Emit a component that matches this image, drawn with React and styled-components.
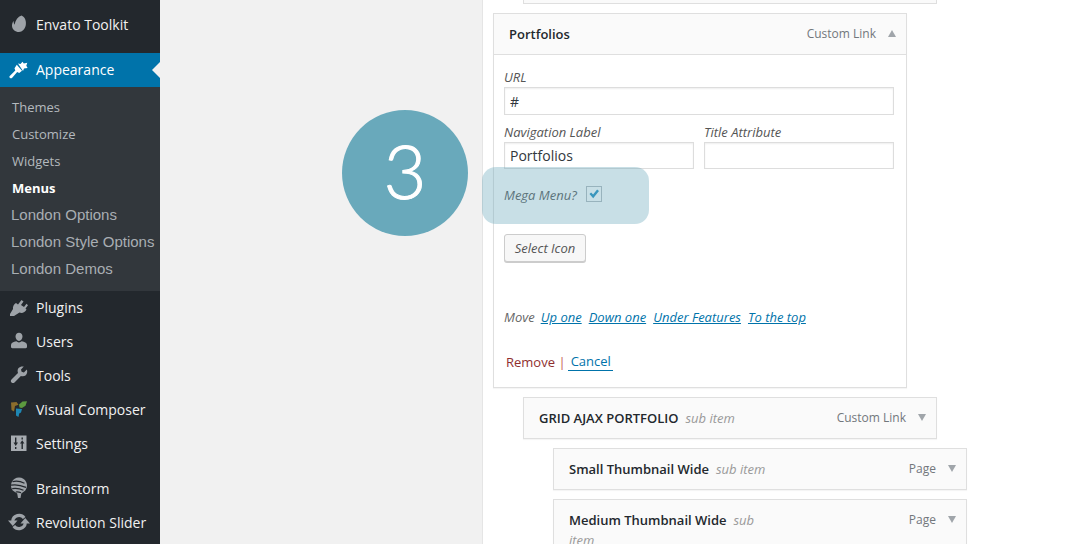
import React from "react";
import styled, { createGlobalStyle } from "styled-components";

const GlobalStyle = createGlobalStyle`
	html, body {
		margin: 0;
		height: 100%;
		overflow: hidden;
		background: #fff;
		font-family: "Open Sans", sans-serif;
	}
`;

//icons
const EnvatoIcon = () => (
	<svg width="20" height="20" viewBox="0 0 20 20">
		<path d="M12.500 1.500c3.500 1.500 5 5.500 4.300 9.500-.7 4-3.500 7-6.800 7-3.800 0-7-2.600-7-6.300 0-1.800.6-3.400 1.500-4.700.1 1.500.4 2.800 1 3.700C6.500 6 8.800 2.800 12.500 1.500z" fill="#9ea3a8" />
	</svg>
);
const BrushIcon = () => (
	<svg width="20" height="20" viewBox="0 0 20 20">
		<path d="M9 4.500l2.500.5L13.500 2.800 14.800 4.400 18.300 3.800 17.300 6.800 18.600 9 15 9.500 14 12z" fill="#fff" />
		<path d="M7.800 5.800l5.200 6-2.800 2.200-2-1-5 5.800c-.7.700-1.800.7-2.400 0-.6-.7-.5-1.500.2-2.100L6.300 11.400 5.500 9.200z" fill="#fff" />
	</svg>
);
const PluginIcon = () => (
	<svg width="20" height="20" viewBox="0 0 20 20">
		<path d="M12.500 3l2 1.500L12 8l3 2 2.500-3.200 1.500 1.500-2.500 3.200 1 1c-1.500 3-4.500 4-7 3L5 19H1v-2l3-5c-.5-2.500 1-5 3-6l2 1.500z" fill="#9ea3a8" />
	</svg>
);
const UserIcon = () => (
	<svg width="20" height="20" viewBox="0 0 20 20">
		<path d="M10 1.800c2 0 3.500 1.600 3.500 3.800S12 10 10 10 6.500 7.800 6.500 5.600 8 1.800 10 1.800zM7.300 10.300c.7.700 1.600 1.100 2.700 1.100s2-.4 2.700-1.100c2.700.5 5.300 1.700 5.300 3.700v2.100c0 .8-.6 1.100-1.300 1.100H3.300c-.7 0-1.300-.3-1.300-1.100V14c0-2 2.600-3.200 5.300-3.700z" fill="#9ea3a8" />
	</svg>
);
const WrenchIcon = () => (
	<svg width="20" height="20" viewBox="0 0 20 20">
		<path d="M17.800 4.600l-2.900 2.800-2.300-.6-.6-2.300 2.800-2.900c-2-.5-4.100.1-5.200 1.500-1.100 1.300-1.300 3.300-.6 4.800l-6.500 6.500c-.9.800-.9 2.200 0 3s2.200.8 3 0l6.400-6.500c1.600.7 3.600.4 4.900-.7 1.400-1.200 1.900-3.600 1-5.600z" fill="#9ea3a8" />
	</svg>
);
const ComposerIcon = () => (
	<svg width="20" height="20" viewBox="0 0 20 20">
		<path d="M2 3.500l5.500-.5 2 2.800-3.500 1.200-1 5.500-2.500-1.500z" fill="#8c6d2c" />
		<path d="M10 5.500l3.500-3 4.500-.3-1.500 4.500-3.500 2.300-2.500-.5z" fill="#5c9a3f" />
		<path d="M7 9.500l6 .5-1 3.500-1.800 1 -.7 3.500-2.500-1.500z" fill="#1e87b4" />
	</svg>
);
const SlidersIcon = () => (
	<svg width="20" height="20" viewBox="0 0 20 20">
		<path d="M2 2.500h15.500v15.500H2z" fill="#a6abb0" />
		<path d="M6 4.500h1.400v5h1.600L6.700 13 4.500 9.500H6zM6 14h1.400v2H6zM12.500 4.500h1.400v2h-1.400zM13.200 7.200l2.200 3.200h-1.500V16h-1.400v-5.600H11z" fill="#23282d" />
	</svg>
);
const BrainstormIcon = () => (
	<svg width="20" height="22" viewBox="0 0 20 22">
		<path d="M10 .5a8 8 0 0 1 6.300 12.900l-4 3.100-.8 4.500H9l-.8-4.500-4.500-3.100A8 8 0 0 1 10 .5z" fill="#9ea3a8" />
		<path d="M3.500 4.600c3.500-1 8-.4 12 1.600M2 8.200c4-.9 9.500-.2 15 2.200M3.200 11.700c3.500-.6 7.500-.2 11.300 1.600M6.800 15c1.500-.2 3.500 0 5.300.7" stroke="#23282d" strokeWidth="1.200" fill="none" />
	</svg>
);
const RevolutionIcon = () => (
	<svg width="20" height="20" viewBox="0 0 20 20">
		<path d="M3.700 9a6.400 6.400 0 0 1 11.500-3M16.300 11a6.400 6.400 0 0 1-11.500 3" stroke="#9ea3a8" strokeWidth="3.200" fill="none" />
		<path d="M-1 8.500h9.500L3.800 14zM21 11.500h-9.500L16.200 6z" fill="#9ea3a8" />
	</svg>
);

const Page = styled.div`
	position: relative;
	display: flex;
	width: 1071px;
	height: 544px;
	overflow: hidden;
`;

const Sidebar = styled.nav`
	flex: none;
	width: 160px;
	height: 544px;
	padding-top: 8px;
	box-sizing: border-box;
	background: #23282d;
	overflow: hidden;
`;

const MenuItem = styled.div`
	display: flex;
	align-items: center;
	box-sizing: border-box;
	height: 34px;
	gap: 7px;
	padding: 0 0 2px 9px;
	position: relative;
	color: #f1f1f1;
	font-size: 14px;
	margin-top: ${p => p.$gap || 0}px;
	background: ${p => (p.$active ? "#0073aa" : "transparent")};
	${p => p.$active && "color: #fff;"}

	svg {
		flex: none;
		overflow: visible;
	}

	${p =>
		p.$active &&
		`&::after {
			content: "";
			position: absolute;
			right: 0;
			top: 9px;
			border: 8px solid transparent;
			border-right-color: #f1f1f1;
			border-left-width: 0;
		}`}
`;

const SubMenu = styled.div`
	background: #32373c;
	padding: 7px 0 8px;
`;

const SubItem = styled.div`
	height: 27px;
	line-height: 27px;
	padding-left: 12px;
	font-size: 13px;
	white-space: nowrap;
	color: ${p => (p.$current ? "#fff" : "#b4b9be")};
	font-weight: ${p => (p.$current ? 700 : 400)};
`;

const PluginSubItem = styled(SubItem)`
	padding-left: 11px;
	line-height: 25px;
	font-family: "Liberation Sans", Arial, sans-serif;
	font-size: 15px;
	color: #a9aeb3;
`;

const Gutter = styled.div`
	flex: none;
	width: 322px;
	background: #f1f1f1;
`;

const Panel = styled.main`
	flex: 1;
	border-left: 1px solid #e5e5e5;
	padding-left: 10px;
`;

const CutCard = styled.div`
	width: 414px;
	height: 4px;
	margin-left: 30px;
	margin-bottom: 9px;
	box-sizing: border-box;
	border: 1px solid #dfdfdf;
	border-top: 0;
	background: #fafafa;
`;

const Card = styled.section`
	width: 414px;
	box-sizing: border-box;
	margin-left: ${p => (p.$depth || 0) * 30}px;
	margin-bottom: 9px;
	border: 1px solid #dfdfdf;
	background: #fff;
	box-shadow: 0 1px 1px rgba(0, 0, 0, 0.04);
`;

const CardBar = styled.header`
	display: flex;
	justify-content: space-between;
	min-height: 40px;
	background: #fafafa;
	${p => p.$open && "border-bottom: 1px solid #dfdfdf;"}
	font-size: 13px;
	line-height: 20px;
`;

const CardTitle = styled.div`
	padding: 10px 15px;
	width: ${p => p.$width || "auto"};
	color: #23282d;
	font-weight: 600;

	em {
		margin-left: 7px;
		font-weight: 400;
		color: #999;
	}
`;

const CardMeta = styled.div`
	display: flex;
	flex: none;
	align-items: flex-start;
	gap: 12px;
	padding: 10px 10px 0 0;
	color: #72777c;
	font-size: 12px;
`;

const Arrow = styled.span`
	margin-top: 6px;
	width: 0;
	height: 0;
	border-left: 4px solid transparent;
	border-right: 4px solid transparent;
	${p => (p.$up ? "border-bottom" : "border-top")}: 7px solid #a0a5aa;
`;

const CardBody = styled.div`
	padding: 13px 12px 16px 10px;
	color: #555;
	font-size: 13px;
`;

const Label = styled.label`
	display: block;
	font-style: italic;
	line-height: 18px;
`;

const Field = styled.div`
	box-sizing: border-box;
	height: 28px;
	margin-top: 1px;
	padding: 0 5px;
	border: 1px solid #ddd;
	box-shadow: inset 0 1px 2px rgba(0, 0, 0, 0.07);
	background: #fff;
	color: #32373c;
	font-size: 14px;
	line-height: 28px;
`;

const ShortField = styled(Field)`
	height: 27px;
	line-height: 26px;
`;

const TwoCols = styled.div`
	display: grid;
	grid-template-columns: 190px 190px;
	gap: 10px;
	margin-top: 8px;
`;

const MegaRow = styled.div`
	display: flex;
	align-items: center;
	gap: 9px;
	height: 18px;
	margin-top: 17px;
	font-style: italic;
	font-size: 13px;
`;

const Check = styled.span`
	display: flex;
	align-items: center;
	justify-content: center;
	width: 16px;
	height: 16px;
	margin-top: -2px;
	box-sizing: border-box;
	border: 1px solid #b4b9be;
	background: #fff;
`;

const SelectButton = styled.button`
	display: block;
	width: 82px;
	height: 28px;
	margin-top: 30px;
	padding: 0;
	border: 1px solid #ccc;
	border-radius: 3px;
	background: #f7f7f7;
	box-shadow: 0 1px 0 #ccc;
	color: #555;
	font: italic 13px "Open Sans", sans-serif;
`;

const MoveRow = styled.div`
	display: flex;
	gap: 7px;
	margin-top: 46px;
	line-height: 18px;
	font-style: italic;
	font-size: 13px;
	color: #666;

	span {
		margin-right: -1px;
	}

	a {
		color: #0073aa;
		text-decoration: underline;
	}
`;

const ActionRow = styled.div`
	display: flex;
	align-items: center;
	margin-top: 26px;
	padding-left: 2px;
	font-size: 13px;
	line-height: 18px;
`;

const RemoveLink = styled.a`
	color: #8f2f2f;
`;

const Divider = styled.span`
	margin: 0 2px 0 3.500px;
	color: #a00;
	opacity: 0.7;
`;

const CancelLink = styled.a`
	padding: 0 2px 0 3px;
	color: #0073aa;
	border-bottom: 1px solid #0073aa;
`;

const StepBubble = styled.div`
	position: absolute;
	left: 342px;
	top: 110px;
	width: 126px;
	height: 126px;
	box-sizing: border-box;
	padding-bottom: 5px;
	display: flex;
	align-items: center;
	justify-content: center;
	border-radius: 50%;
	background: #69a9bb;
	color: #fff;
	font-family: Lato, sans-serif;
	font-weight: 300;
	font-size: 74px;
	-webkit-text-stroke: 1px #fff;
`;

const Highlight = styled.div`
	position: absolute;
	left: 482px;
	top: 167px;
	width: 167px;
	height: 57px;
	border-radius: 14px;
	background: rgba(105, 169, 187, 0.37);
`;

const mainItems = [
	{ label: "Plugins", icon: <PluginIcon /> },
	{ label: "Users", icon: <UserIcon /> },
	{ label: "Tools", icon: <WrenchIcon /> },
	{ label: "Visual Composer", icon: <ComposerIcon /> },
	{ label: "Settings", icon: <SlidersIcon /> },
];

export default function App() {
	return (
		<Page>
			<GlobalStyle />
			<Sidebar>
				<MenuItem>
					<EnvatoIcon />
					Envato Toolkit
				</MenuItem>
				<MenuItem $active $gap={11}>
					<BrushIcon />
					Appearance
				</MenuItem>
				<SubMenu>
					<SubItem>Themes</SubItem>
					<SubItem>Customize</SubItem>
					<SubItem>Widgets</SubItem>
					<SubItem $current>Menus</SubItem>
					<PluginSubItem>London Options</PluginSubItem>
					<PluginSubItem>London Style Options</PluginSubItem>
					<PluginSubItem>London Demos</PluginSubItem>
				</SubMenu>
				{mainItems.map(item => (
					<MenuItem key={item.label}>
						{item.icon}
						{item.label}
					</MenuItem>
				))}
				<MenuItem $gap={11}>
					<BrainstormIcon />
					Brainstorm
				</MenuItem>
				<MenuItem>
					<RevolutionIcon />
					Revolution Slider
				</MenuItem>
			</Sidebar>
			<Gutter />
			<Panel>
				<CutCard />
				<Card>
					<CardBar $open>
						<CardTitle>Portfolios</CardTitle>
						<CardMeta>
							Custom Link
							<Arrow $up />
						</CardMeta>
					</CardBar>
					<CardBody>
						<Label>URL</Label>
						<Field>#</Field>
						<TwoCols>
							<div>
								<Label>Navigation Label</Label>
								<ShortField>Portfolios</ShortField>
							</div>
							<div>
								<Label>Title Attribute</Label>
								<ShortField />
							</div>
						</TwoCols>
						<MegaRow>
							Mega Menu?
							<Check>
								<svg width="12" height="12" viewBox="0 0 12 12">
									<path d="M1.500 6l1.600-1.500 2 2 4-5L11 3 5.200 10.200z" fill="#1e8cbe" />
								</svg>
							</Check>
						</MegaRow>
						<SelectButton>Select Icon</SelectButton>
						<MoveRow>
							<span>Move</span>
							<a>Up one</a>
							<a>Down one</a>
							<a>Under Features</a>
							<a>To the top</a>
						</MoveRow>
						<ActionRow>
							<RemoveLink>Remove</RemoveLink>
							<Divider>|</Divider>
							<CancelLink>Cancel</CancelLink>
						</ActionRow>
					</CardBody>
				</Card>
				<Card $depth={1}>
					<CardBar>
						<CardTitle>
							GRID AJAX PORTFOLIO<em>sub item</em>
						</CardTitle>
						<CardMeta>
							Custom Link
							<Arrow />
						</CardMeta>
					</CardBar>
				</Card>
				<Card $depth={2}>
					<CardBar>
						<CardTitle>
							Small Thumbnail Wide<em>sub item</em>
						</CardTitle>
						<CardMeta>
							Page
							<Arrow />
						</CardMeta>
					</CardBar>
				</Card>
				<Card $depth={2}>
					<CardBar>
						<CardTitle $width="190px">
							Medium Thumbnail Wide<em>sub item</em>
						</CardTitle>
						<CardMeta>
							Page
							<Arrow />
						</CardMeta>
					</CardBar>
				</Card>
			</Panel>
			<StepBubble>3</StepBubble>
			<Highlight />
		</Page>
	);
}
